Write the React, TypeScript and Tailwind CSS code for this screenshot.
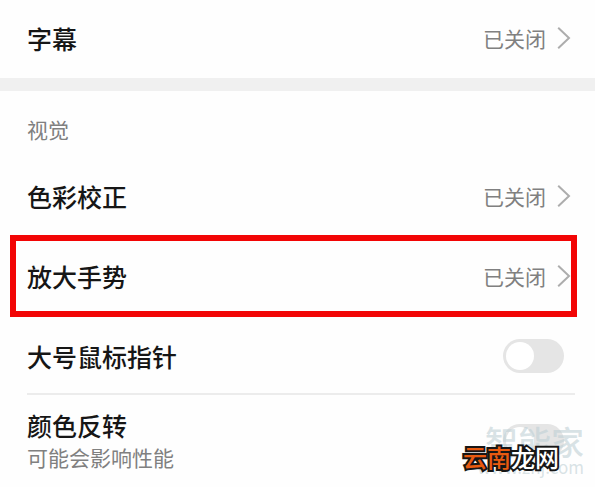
import { useState } from "react";

type LinkRowProps = {
  label: string;
  status: string;
  highlighted?: boolean;
};

function Chevron() {
  return (
    <svg
      viewBox="0 0 14 24"
      className="h-6 w-3.5 shrink-0"
      fill="none"
      stroke="#adadad"
      strokeWidth="2"
      aria-hidden="true"
    >
      <path d="M1.2 1.8 12 12 1.2 22.2" />
    </svg>
  );
}

function LinkRow({ label, status, highlighted }: LinkRowProps) {
  return (
    <button
      type="button"
      className="relative flex h-20 w-full items-center pr-6 pl-[27px] text-left"
    >
      <span className="flex-1 text-[25px] leading-8 font-medium text-[#161616]">
        {label}
      </span>
      <span className="mr-[11px] text-[21px] leading-8 text-[#808080]">
        {status}
      </span>
      <Chevron />
      {highlighted && (
        <span className="pointer-events-none absolute inset-y-0 right-[18px] left-2.5 -my-px border-6 border-[#f20505]" />
      )}
    </button>
  );
}

type SwitchRowProps = {
  id: string;
  label: string;
  hint?: string;
};

function SwitchRow({ id, label, hint }: SwitchRowProps) {
  const [checked, setChecked] = useState(false);

  return (
    <div className="flex items-center pr-[31px] pl-[27px]">
      <label htmlFor={id} className="flex flex-1 flex-col">
        <span className="text-[25px] leading-8 font-medium text-[#161616]">
          {label}
        </span>
        {hint && (
          <span className="text-[21px] leading-8 text-[#808080]">{hint}</span>
        )}
      </label>
      <input
        id={id}
        type="checkbox"
        role="switch"
        checked={checked}
        onChange={(e) => setChecked(e.target.checked)}
        className="h-[34px] w-[61px] shrink-0 appearance-none rounded-full bg-[#e5e5e5] p-[3px] before:block before:size-7 before:rounded-full before:bg-white before:transition-transform checked:bg-blue-500 checked:before:translate-x-[27px]"
      />
    </div>
  );
}

function Watermark() {
  return (
    <div className="pointer-events-none absolute right-[11px] bottom-3 flex flex-col items-end text-[#bfd0d5]/60">
      <span className="text-[33px] leading-9 font-medium">智能家</span>
      <span className="text-[17px] leading-4">www.znj.com</span>
    </div>
  );
}

function SiteBadge() {
  return (
    <div className="pointer-events-none absolute right-9 bottom-3.5 text-2xl leading-8 font-medium text-white [paint-order:stroke_fill] [-webkit-text-stroke:4px_#161616]">
      <span className="text-[#e85a10]">云南</span>龙网
    </div>
  );
}

export default function App() {
  return (
    <main className="relative min-h-screen overflow-hidden bg-[#fefefe] font-['Noto_Sans_CJK_SC',sans-serif]">
      <section className="flow-root border-b-[13px] border-[#f0f0f0]">
        <div className="-mt-0.5">
          <LinkRow label="字幕" status="已关闭" />
        </div>
      </section>

      <section>
        <h2 className="pt-[22px] pb-[11px] pl-[27px] text-[21px] leading-8 text-[#808080]">
          视觉
        </h2>
        <LinkRow label="色彩校正" status="已关闭" />
        <LinkRow label="放大手势" status="已关闭" highlighted />
        <div className="pt-[23px] pb-5">
          <SwitchRow id="large-pointer" label="大号鼠标指针" />
        </div>
        <hr className="mr-5 ml-[27px] border-t-2 border-[#ececec]" />
        <div className="pt-3.5">
          <SwitchRow
            id="invert-colors"
            label="颜色反转"
            hint="可能会影响性能"
          />
        </div>
      </section>

      <Watermark />
      <SiteBadge />
    </main>
  );
}
